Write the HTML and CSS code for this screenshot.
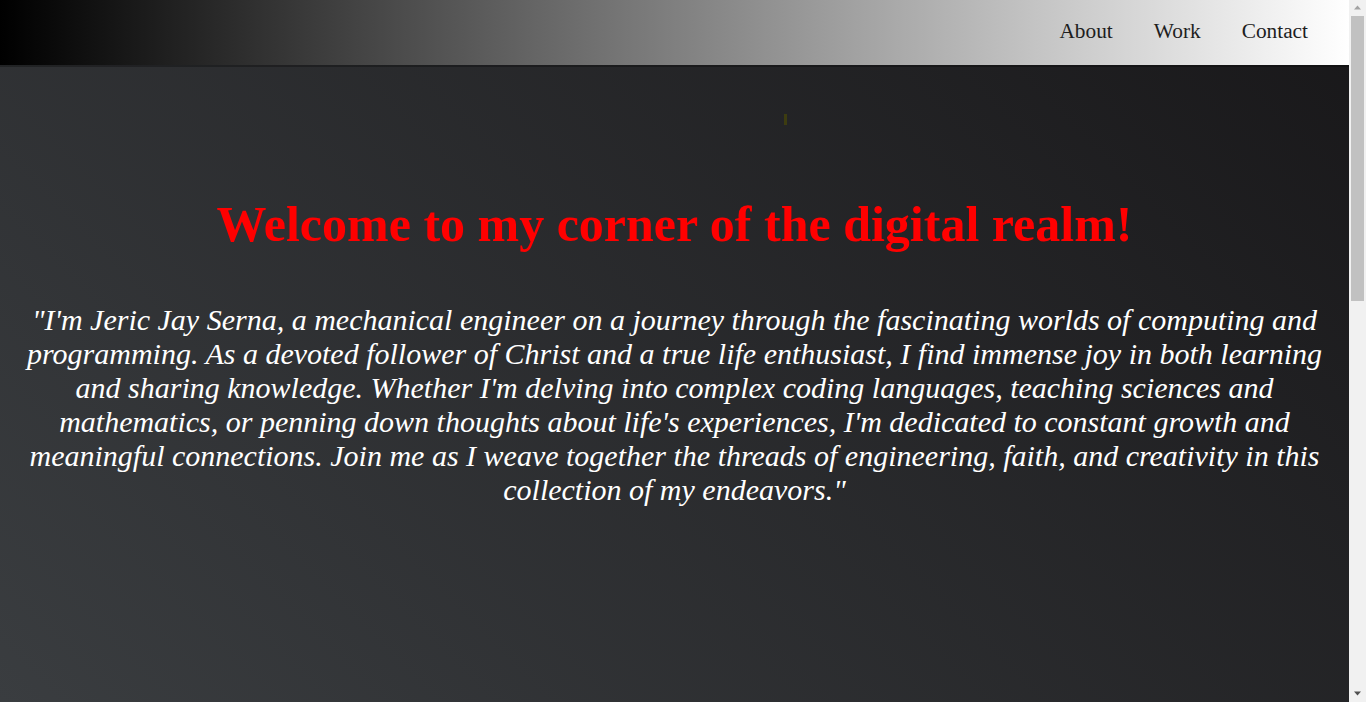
FILE: index.html
```html
<!DOCTYPE html>
<html lang="en">
<head>
<meta charset="utf-8">
<title>Jeric Jay Serna</title>
<link rel="stylesheet" href="styles.css">
</head>
<body>
<header class="site-header">
  <nav class="nav">
    <a class="nav-link" href="#about">About</a>
    <a class="nav-link" href="#work">Work</a>
    <a class="nav-link" href="#contact">Contact</a>
  </nav>
</header>
<main class="hero">
  <div class="marker"></div>
  <h1 class="title">Welcome to my corner of the digital realm!</h1>
  <p class="intro">"I'm Jeric Jay Serna, a mechanical engineer on a journey through the fascinating worlds of computing and programming. As a devoted follower of Christ and a true life enthusiast, I find immense joy in both learning and sharing knowledge. Whether I'm delving into complex coding languages, teaching sciences and mathematics, or penning down thoughts about life's experiences, I'm dedicated to constant growth and meaningful connections. Join me as I weave together the threads of engineering, faith, and creativity in this collection of my endeavors."</p>
</main>
<div class="scrollbar" aria-hidden="true">
  <svg class="sb-arrow" width="17" height="16" viewBox="0 0 17 16"><path d="M5 9.5 L8.5 5.5 L12 9.5 Z" fill="#a3a3a3"/></svg>
  <div class="sb-track"><div class="sb-thumb"></div></div>
  <svg class="sb-arrow" width="17" height="17" viewBox="0 0 17 17"><path d="M5 6.5 L12 6.5 L8.5 10.5 Z" fill="#505050"/></svg>
</div>
</body>
</html>
```

FILE: styles.css
```css
html, body {
  margin: 0;
  padding: 0;
}

body {
  font-family: "Liberation Serif", "Times New Roman", serif;
  background: linear-gradient(45deg, #3a3d40 0%, #181719 100%) fixed;
  min-height: 1650px;
  margin-right: 17px;
}

.site-header {
  height: 65px;
  display: flex;
  align-items: center;
  justify-content: flex-end;
  background: linear-gradient(to right, #000000, #ffffff);
  box-shadow: 0 2px 0 rgba(0, 0, 0, 0.28);
  position: relative;
  z-index: 1;
}

.nav {
  display: flex;
  gap: 41px;
  padding-right: 41px;
  margin-bottom: 4px;
}

.nav-link {
  color: #1e1e1e;
  text-decoration: none;
  font-size: 21.33px;
  line-height: 24px;
}

.hero {
  padding: 49px 20px 0;
}

.marker {
  width: 3px;
  height: 11px;
  margin-left: 764px;
  background: #3d3c10;
}

.title {
  margin: 71px 0 0;
  text-align: center;
  color: #ff0000;
  font-size: 50px;
  line-height: 57.5px;
  font-weight: bold;
}

.intro {
  margin: 49px 0 0;
  text-align: center;
  color: #ffffff;
  font-style: italic;
  font-size: 30px;
  line-height: 34px;
}

.scrollbar {
  position: fixed;
  top: 0;
  right: 0;
  width: 17px;
  height: 100vh;
  background: #f1f1f1;
  display: flex;
  flex-direction: column;
  z-index: 10;
}

.sb-arrow {
  display: block;
  flex: none;
}

.sb-track {
  flex: 1;
  padding: 0 2px;
}

.sb-thumb {
  height: 285px;
  background: #c1c1c1;
}
```
